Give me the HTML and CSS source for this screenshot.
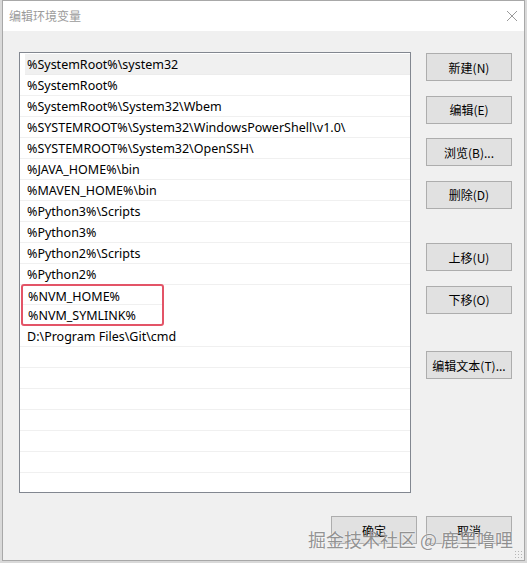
FILE: index.html
```html
<!DOCTYPE html>
<html lang="zh-CN">
<head>
	<meta charset="UTF-8" />
	<title>编辑环境变量</title>
	<link rel="stylesheet" href="styles.css">
</head>
<body>
	<div class="window">
		<div class="titlebar">
			<span class="title">编辑环境变量</span>
			<svg class="close" width="12" height="12" viewBox="0 0 12 12">
				<path d="M1 1 L11 11 M11 1 L1 11" stroke="#9a9a9a" stroke-width="1" fill="none" />
			</svg>
		</div>
		<div class="content">
			<div class="main">
				<div class="pathlist">
					<div class="row sel">%SystemRoot%\system32</div>
					<div class="row">%SystemRoot%</div>
					<div class="row">%SystemRoot%\System32\Wbem</div>
					<div class="row">%SYSTEMROOT%\System32\WindowsPowerShell\v1.0\</div>
					<div class="row">%SYSTEMROOT%\System32\OpenSSH\</div>
					<div class="row">%JAVA_HOME%\bin</div>
					<div class="row">%MAVEN_HOME%\bin</div>
					<div class="row">%Python3%\Scripts</div>
					<div class="row">%Python3%</div>
					<div class="row">%Python2%\Scripts</div>
					<div class="row">%Python2%</div>
					<div class="mark">
						<div class="row">%NVM_HOME%</div>
						<div class="row">%NVM_SYMLINK%</div>
					</div>
					<div class="row">D:\Program Files\Git\cmd</div>
					<div class="row"></div>
					<div class="row"></div>
					<div class="row"></div>
					<div class="row"></div>
					<div class="row"></div>
					<div class="row"></div>
				</div>
				<div class="buttons">
					<button>新建(N)</button>
					<button>编辑(E)</button>
					<button>浏览(B)...</button>
					<button class="group-end">删除(D)</button>
					<button>上移(U)</button>
					<button class="group-end last">下移(O)</button>
					<button>编辑文本(T)...</button>
				</div>
			</div>
			<div class="footer">
				<button>确定</button>
				<button>取消</button>
			</div>
			<div class="watermark">掘金技术社区 @ 鹿里噜哩</div>
			<div class="grip"></div>
		</div>
	</div>
</body>
</html>
```

FILE: styles.css
```css
body {
	margin: 0;
	padding: 0 0 0 2px;
	background: #d9d9d9;
	font-family: "Noto Sans", "Noto Sans CJK SC", sans-serif;
}

.window {
	width: 521px;
	height: 559px;
	border: 1px solid #a8a8a8;
	background: #f0f0f0;
	display: flex;
	flex-direction: column;
}

.titlebar {
	height: 30px;
	background: #fff;
	display: flex;
	align-items: center;
	justify-content: space-between;
	padding: 0 6px 0 6px;
}

.title {
	font-family: "Noto Sans CJK SC", sans-serif;
	font-size: 12px;
	color: #9b9b9b;
	margin-top: -1px;
}

.close {
	margin-top: -1px;
}

.content {
	position: relative;
	flex: 1;
	padding: 21px 12px 0 16px;
}

.main {
	display: flex;
	align-items: flex-start;
	gap: 15px;
}

.pathlist {
	width: 390px;
	height: 439px;
	border: 1px solid #828790;
	background: #fff;
	overflow: hidden;
}

.row {
	height: 20px;
	line-height: 22px;
	border-bottom: 1px solid #f0f0f0;
	padding-left: 7px;
	font-size: 12.5px;
	color: #000;
	white-space: nowrap;
}

.row.sel {
	margin: 1px 0 0 5px;
	padding-left: 2px;
	background: #f0f0f0;
	border-bottom-color: #ececec;
}

.mark {
	margin: -1px 246px 0 1px;
	border: 2px solid #e35467;
	border-radius: 3px;
	height: 38px;
}

.mark .row {
	padding-left: 5px;
	height: 18px;
	line-height: 21px;
	border-bottom: 1px solid #f0f0f0;
}

.mark .row + .row {
	border-bottom: none;
}

button {
	width: 86px;
	height: 28px;
	padding: 0;
	border: 1px solid #adadad;
	background: #e1e1e1;
	font-family: "Noto Sans CJK SC", sans-serif;
	font-size: 12px;
	color: #000;
}

.buttons {
	display: flex;
	flex-direction: column;
	gap: 14.5px;
	padding-top: 1px;
}

.buttons .group-end {
	margin-bottom: 20px;
}

.buttons .last {
	margin-bottom: 23px;
}

.footer {
	display: flex;
	justify-content: flex-end;
	gap: 9px;
	margin-top: 23px;
}

.watermark {
	position: absolute;
	right: 11px;
	bottom: 8px;
	font-family: "Noto Sans CJK SC", sans-serif;
	font-size: 18px;
	color: #8a8a8a;
	text-shadow: 0 0 2px #fff, 0 0 1px #fff;
	opacity: 0.9;
}

.grip {
	position: absolute;
	right: 2px;
	bottom: 2px;
	width: 8px;
	height: 8px;
	background: radial-gradient(circle, #b5b5b5 0.8px, transparent 1px) 0 0 / 3px 3px;
}
```
